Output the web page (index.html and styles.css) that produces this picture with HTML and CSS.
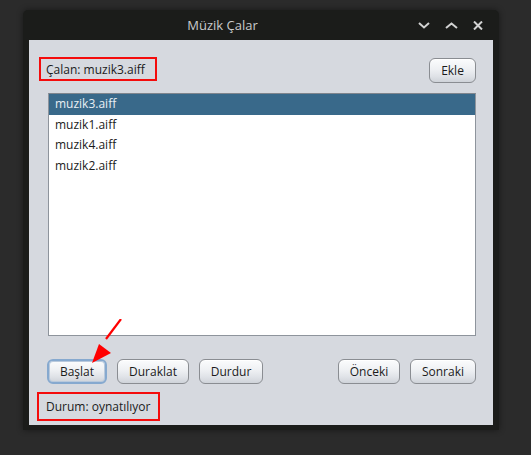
FILE: index.html
```html
<!DOCTYPE html>
<html lang="tr">
<head>
<meta charset="utf-8">
<title>Müzik Çalar</title>
<link rel="stylesheet" href="styles.css">
</head>
<body>
<div class="window">
  <div class="titlebar">
    <div class="title">Müzik Çalar</div>
    <div class="controls">
      <span class="ctl"><svg width="12" height="7" viewBox="0 0 12 7"><path d="M1 1 L6 5.5 L11 1" fill="none" stroke="#d2d2d2" stroke-width="2"/></svg></span>
      <span class="ctl"><svg width="13" height="7" viewBox="0 0 13 7"><path d="M1 6 L6.5 1.5 L12 6" fill="none" stroke="#d2d2d2" stroke-width="2"/></svg></span>
      <span class="ctl"><svg width="10" height="9" viewBox="0 0 10 9"><path d="M1 0.5 L9 8.5 M9 0.5 L1 8.5" fill="none" stroke="#d2d2d2" stroke-width="2"/></svg></span>
    </div>
  </div>
  <div class="content">
    <div class="toprow">
      <div class="label redbox">Çalan: muzik3.aiff</div>
      <button class="btn btn-ekle">Ekle</button>
    </div>
    <div class="list">
      <div class="row selected">muzik3.aiff</div>
      <div class="row">muzik1.aiff</div>
      <div class="row">muzik4.aiff</div>
      <div class="row">muzik2.aiff</div>
    </div>
    <div class="buttons">
      <div class="group">
        <button class="btn focused w-baslat">Başlat</button>
        <button class="btn w-duraklat">Duraklat</button>
        <button class="btn w-durdur">Durdur</button>
      </div>
      <div class="group">
        <button class="btn w-onceki">Önceki</button>
        <button class="btn w-sonraki">Sonraki</button>
      </div>
    </div>
    <div class="status redbox">Durum: oynatılıyor</div>
  </div>
</div>
<svg class="arrow" width="40" height="45" viewBox="0 0 40 45">
  <path d="M31 0 L16 20" stroke="#ff0000" stroke-width="2.2" fill="none"/>
  <path d="M2 44 L9 25 L21 34 Z" fill="#ff0000"/>
</svg>
</body>
</html>
```
FILE: styles.css
```css
* { box-sizing: border-box; }
html, body { margin: 0; padding: 0; }
body {
  background: #2b2b2b;
  width: 531px;
  height: 455px;
  padding: 10px 0 0 23px;
  font-family: "Open Sans", "Noto Sans", sans-serif;
  font-size: 12px;
  color: #1b1b1b;
  position: relative;
  overflow: hidden;
}
.window {
  width: 476px;
  height: 420px;
  background: #1b1c1a;
  border-radius: 5px 5px 0 0;
  box-shadow: 0 0 6px rgba(0,0,0,0.45);
  display: flex;
  flex-direction: column;
  padding: 0 6px 5px 6px;
}
.titlebar {
  height: 30px;
  display: flex;
  align-items: center;
  margin: 0 -6px;
}
.title {
  flex: 1;
  text-align: center;
  padding-left: 9px;
  font-size: 13px;
  color: #c9cbcc;
}
.controls {
  display: flex;
  align-items: center;
  padding-right: 10px;
  gap: 5px;
}
.ctl {
  width: 22px;
  height: 30px;
  display: flex;
  align-items: center;
  justify-content: center;
}
.content {
  flex: 1;
  background: #d6d9df;
  display: flex;
  flex-direction: column;
}
.toprow {
  display: flex;
  justify-content: space-between;
  align-items: flex-start;
  padding: 17px 17px 0 10px;
}
.redbox {
  border: 2px solid #f40c0c;
  display: flex;
  align-items: center;
}
.label {
  width: 118px;
  height: 24px;
  padding-left: 5px;
}
.btn {
  font-family: "Open Sans", "Noto Sans", sans-serif;
  font-size: 12px;
  color: #1b1b1b;
  height: 25px;
  padding: 0;
  border: 1px solid #8a8d92;
  border-radius: 6px;
  background: linear-gradient(#fbfcfd 0%, #eef0f3 45%, #dfe2e7 75%, #cfd3d9 100%);
  box-shadow: inset 0 1px 0 #ffffff;
}
.btn-ekle { width: 47px; margin-top: 1px; }
.focused {
  border: 2px solid #86a9cf;
  box-shadow: inset 0 0 0 1px #b9c9dc;
}
.w-baslat { width: 60px; }
.w-duraklat { width: 72px; }
.w-durdur { width: 64px; }
.w-onceki { width: 62px; }
.w-sonraki { width: 66px; }
.list {
  margin: 10px 17px 0 19px;
  height: 243px;
  background: #ffffff;
  border: 1px solid #8e949c;
  border-top-color: #7f858d;
}
.row {
  height: 20.6px;
  line-height: 20.6px;
  padding-left: 6px;
  white-space: nowrap;
}
.selected {
  background: #39698a;
  color: #e9eff4;
}
.buttons {
  display: flex;
  justify-content: space-between;
  margin-top: 23px;
  padding: 0 17px 0 18px;
}
.group {
  display: flex;
  gap: 10px;
}
.status {
  margin: 8px 0 0 8px;
  width: 123px;
  height: 29px;
  padding-left: 7px;
}
.arrow {
  position: absolute;
  left: 90px;
  top: 319px;
}
```
